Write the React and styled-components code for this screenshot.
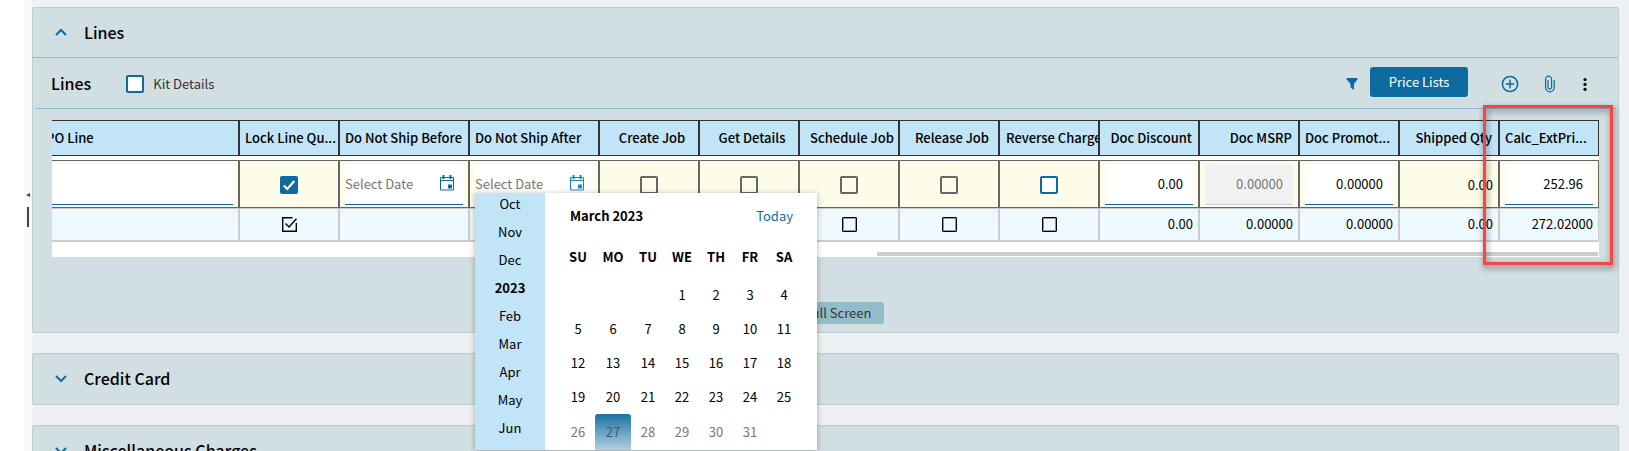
import React from "react";
import styled, { createGlobalStyle, css } from "styled-components";

const GlobalStyle = createGlobalStyle`
  * {
    box-sizing: border-box;
  }

  body {
    margin: 0;
    background: #edf1f4;
    overflow: hidden;
  }

  body, button, input {
    font-family: "Noto Sans CJK SC", "Open Sans", sans-serif;
    font-size: 13px;
    line-height: 18px;
    color: #000;
  }
`;

const Page = styled.div`
  display: flex;
  height: 100vh;
  overflow: hidden;
`;

const Gutter = styled.div`
  flex: 0 0 24px;
  background: #fff;
`;

const Splitter = styled.div`
  display: flex;
  flex: 0 0 8px;
  flex-direction: column;
  align-items: center;
  gap: 10px;
  padding-top: 193px;
  background: #fafafa;
`;

const SplitArrow = styled.span`
  border: 2px solid transparent;
  border-right: 4px solid #444;
  border-left: 0;
`;

const SplitHandle = styled.span`
  width: 2px;
  height: 20px;
  background: #444;
`;

const Main = styled.main`
  display: flex;
  flex: 1;
  flex-direction: column;
  gap: 20px;
  min-width: 0;
  padding: 7px 10px 0 0;
`;

const Panel = styled.section`
  flex: none;
  border: 1px solid #bccdd0;
  border-radius: 2px;
  background: #d1dee2;
`;

const PanelHeader = styled.button`
  display: flex;
  align-items: center;
  gap: 14px;
  width: 100%;
  height: 50px;
  padding: 0 0 2px 19px;
  border: 0;
  border-bottom: 1px solid ${props => (props.$open ? "#92bcc8" : "transparent")};
  background: none;
  font-size: 16px;
  font-weight: 500;
  line-height: 24px;
  text-align: left;
  cursor: pointer;
`;

const Toolbar = styled.div`
  display: flex;
  align-items: center;
  height: 51px;
  margin: 0 2px;
  padding: 2px 17px 0 16px;
  border-bottom: 1px solid #92bcc8;
`;

const ToolbarTitle = styled.h2`
  margin: 0 35px 2px 0;
  font-size: 16px;
  font-weight: 500;
  line-height: 24px;
`;

const CheckLabel = styled.label`
  display: flex;
  align-items: center;
  gap: 9px;
  color: #333;
`;

const Actions = styled.div`
  display: flex;
  align-items: center;
  margin-left: auto;
`;

const IconButton = styled.button`
  display: flex;
  justify-content: center;
  width: ${props => props.$width}px;
  padding: 0;
  border: 0;
  background: none;
  cursor: pointer;
`;

const PrimaryButton = styled.button`
  height: 30px;
  width: 98px;
  margin: 0 24px 4px 4px;
  padding: 0;
  border: 0;
  border-radius: 3px;
  background: #0e6b9f;
  color: #fff;
  cursor: pointer;
`;

const GridArea = styled.div`
  position: relative;
  margin: 11px 19px 0;
`;

const Viewport = styled.div`
  overflow: hidden;
  background: #fff;
`;

const ScrollTrack = styled.div`
  display: flex;
  justify-content: flex-end;
  height: 15px;
  padding: 10px 1px 1px 0;
`;

const ScrollThumb = styled.div`
  width: 721px;
  background: #ccc;
`;

/* scrolled to the right end, so the first column starts outside the viewport */
const Table = styled.table`
  width: calc(100% + 12px);
  margin-left: -12px;
  border-spacing: 0;
  table-layout: fixed;
`;

const Col = styled.col`
  width: ${props => props.$width}px;
`;

const headAlign = {
  left: css`
    padding: 0 0 0 5px;
    text-align: left;
  `,
  center: css`
    padding: 0 0 0 6px;
    text-align: center;
  `,
  right: css`
    padding: 0 6px 0 0;
    text-align: right;
  `
};

const HeadCell = styled.th`
  height: 36px;
  border: 1px solid #333;
  background: #c1e4f6;
  font-weight: 500;
  white-space: nowrap;
  overflow: hidden;
  ${props => headAlign[props.$align]}
`;

const Spacer = styled.td`
  height: 4px;
  padding: 0;
`;

const Cell = styled.td`
  text-align: ${props => props.$align};
`;

const EditCell = styled(Cell)`
  height: 48px;
  padding: 3px 5px 2px;
  border: 1px solid #666;
  background: #fdfce8;
`;

const DataCell = styled(Cell)`
  height: 34px;
  padding: 0 5px 2px;
  border: 1px solid #ccc;
  border-bottom-width: 2px;
  background: #edf8ff;
`;

const Field = styled.div`
  display: flex;
  align-items: center;
  height: 41px;
  padding-right: ${props => (props.$date ? 8 : 0)}px;
  border-bottom: 1px solid ${props => (props.$disabled ? "#ccc" : "#0e6b9f")};
  background: ${props => (props.$disabled ? "#f1f1f1" : "#fff")};

  svg {
    margin-bottom: 3px;
  }
`;

const TextInput = styled.input`
  flex: 1;
  width: 100%;
  min-width: 0;
  padding: 0 ${props => (props.$numeric ? 10 : 0)}px 0 0;
  border: 0;
  outline: none;
  background: none;
  text-align: ${props => (props.$numeric ? "right" : "left")};

  &::placeholder {
    color: #757575;
    opacity: 1;
  }

  &:disabled {
    color: #757575;
  }
`;

const CheckWrap = styled.span`
  display: inline-grid;
  vertical-align: middle;

  & > * {
    grid-area: 1 / 1;
  }

  svg {
    z-index: 1;
    pointer-events: none;
  }
`;

const checkKinds = {
  active: css`
    width: 18px;
    height: 18px;
    border: 2px solid #0e6b9f;
    border-radius: 2px;
    background: #fff;

    &:checked {
      background: #0e6b9f;
    }
  `,
  muted: css`
    width: 18px;
    height: 18px;
    border: 2px solid #666;
    border-radius: 2px;
  `,
  plain: css`
    width: 15px;
    height: 15px;
    border: 1px solid #000;
    border-radius: 1px;
    box-shadow: inset 0 0 0 1px rgba(0, 0, 0, 0.4);

    &:checked {
      border-color: transparent;
      box-shadow: none;
    }
  `
};

const CheckInput = styled.input`
  margin: 0;
  appearance: none;
  ${props => checkKinds[props.$kind]}
`;

const Highlight = styled.div`
  position: absolute;
  top: -15px;
  right: -14px;
  width: 130px;
  height: 160px;
  border: 3px solid #fb4343;
  filter: drop-shadow(1px 3px 3px rgba(0, 0, 0, 0.5));
  pointer-events: none;
`;

const PanelFooter = styled.div`
  display: flex;
  justify-content: center;
  padding: 45px 0 8px;
`;

const FooterButton = styled.button`
  height: 22px;
  padding: 0 13px;
  border: 0;
  border-radius: 3px;
  background: #92bcc9;
  color: #333;
`;

const Popup = styled.div`
  position: absolute;
  top: 73px;
  right: 782px;
  z-index: 2;
  display: flex;
  width: 342px;
  height: 257px;
  background: #fff;
  box-shadow: 0 1px 6px rgba(0, 0, 0, 0.3);
`;

const MonthList = styled.ul`
  display: flex;
  flex: 0 0 70px;
  flex-direction: column;
  justify-content: flex-end;
  margin: 0;
  padding: 0 0 8px;
  overflow: hidden;
  background: #c1e4f6;
  list-style: none;
  text-align: center;
`;

const Month = styled.li`
  flex: none;
  font-weight: ${props => (props.$year ? 700 : 400)};
  line-height: 28px;
`;

const Calendar = styled.div`
  flex: 1;
  padding-left: 16px;
`;

const CalendarHeader = styled.div`
  display: flex;
  justify-content: space-between;
  align-items: center;
  height: 43px;
  padding: 2px 24px 0 9px;
`;

const MonthTitle = styled.strong`
  font-weight: 700;
`;

const TodayButton = styled.button`
  padding: 0;
  border: 0;
  background: none;
  color: #0e6b9f;
`;

const Days = styled.table`
  width: 240px;
  border-spacing: 0;
  table-layout: fixed;
`;

const WeekDay = styled.th`
  height: 42px;
  padding: 0;
  font-weight: 700;
`;

const Day = styled.td`
  height: ${props => (props.$faded ? 36 : 34)}px;
  padding: 0;
  border-radius: 3px 3px 0 0;
  color: ${props => (props.$selected ? "#4a5860" : props.$faded ? "#777" : "#000")};
  background: ${props => (props.$selected ? "linear-gradient(#1b72a3, #b3cfe0)" : "none")};
  text-align: center;
`;

const columns = [
  { title: "PO Line", align: "left", edit: "text", value: "" },
  { title: "Lock Line Qu...", width: 100, align: "left", edit: "check", kind: "active", checked: true },
  { title: "Do Not Ship Before", width: 130, align: "left", edit: "date", value: "" },
  { title: "Do Not Ship After", width: 130, align: "left", edit: "date", value: "", active: true },
  { title: "Create Job", width: 100, align: "center", edit: "check", kind: "muted" },
  { title: "Get Details", width: 100, align: "center", edit: "check", kind: "muted" },
  { title: "Schedule Job", width: 100, align: "center", edit: "check", kind: "muted" },
  { title: "Release Job", width: 100, align: "center", edit: "check", kind: "muted" },
  { title: "Reverse Charge", width: 100, align: "center", edit: "check", kind: "active" },
  { title: "Doc Discount", width: 100, align: "right", edit: "number", value: "0.00", saved: "0.00" },
  { title: "Doc MSRP", width: 100, align: "right", edit: "number", value: "0.00000", saved: "0.00000", disabled: true },
  { title: "Doc Promot...", width: 100, align: "left", edit: "number", value: "0.00000", saved: "0.00000" },
  { title: "Shipped Qty", width: 100, align: "right", edit: "none", value: "0.00", saved: "0.00" },
  { title: "Calc_ExtPri...", width: 100, align: "left", edit: "number", value: "252.96", saved: "272.02000" }
];

const months = ["Oct", "Nov", "Dec", "2023", "Feb", "Mar", "Apr", "May", "Jun"];
const weekDays = ["SU", "MO", "TU", "WE", "TH", "FR", "SA"];
const weeks = [
  ["", "", "", 1, 2, 3, 4],
  [5, 6, 7, 8, 9, 10, 11],
  [12, 13, 14, 15, 16, 17, 18],
  [19, 20, 21, 22, 23, 24, 25],
  [26, 27, 28, 29, 30, 31, ""]
];

const Chevron = ({ up }) => (
  <svg width="18" height="14" viewBox="0 0 18 14" fill="none" stroke="#0e6b9f" strokeWidth="2">
    <path d={up ? "M4 10 9 5 14 10" : "M4 5 9 10 14 5"} />
  </svg>
);

const FilterIcon = () => (
  <svg width="12" height="14" viewBox="0 0 12 14" fill="#0e6b9f">
    <path d="M.5 1h11v1.200L8 7v6L4.500 10.500V7L.5 2.200z" />
  </svg>
);

const AddIcon = () => (
  <svg width="18" height="18" viewBox="0 0 18 18" fill="none" stroke="#0e6b9f" strokeWidth="1.500">
    <circle cx="9" cy="9" r="7.600" />
    <path d="M9 4.800v8.400M4.800 9h8.400" />
  </svg>
);

const ClipIcon = () => (
  <svg width="12" height="18" viewBox="0 0 12 18" fill="none" stroke="#0e6b9f" strokeWidth="1.200">
    <path d="M4 5v7.300a1.800 1.800 0 0 0 3.600 0V4.200a3 3 0 0 0-6 0v8.300a4.300 4.300 0 0 0 8.600 0V5" />
  </svg>
);

const MoreIcon = () => (
  <svg width="6" height="14" viewBox="0 0 6 14">
    <circle cx="3" cy="2.500" r="1.600" />
    <circle cx="3" cy="7.400" r="1.600" />
    <circle cx="3" cy="12.300" r="1.600" />
  </svg>
);

const CalendarIcon = ({ active }) => (
  <svg width="16" height="16" viewBox="0 0 16 16" fill="none" stroke={active ? "#1488d4" : "#0e6b9f"}>
    <path d="M1.500 2.500h13v12.500h-13z" />
    <path d="M1 5.500h14" />
    <path d="M4.500 0v4M11.500 0v4" strokeWidth="2" />
    <path d="M9 9.500h4v4h-4z" fill={active ? "#1488d4" : "#0e6b9f"} stroke="none" />
  </svg>
);

const Check = ({ kind, checked, ...rest }) => (
  <CheckWrap>
    <CheckInput type="checkbox" $kind={kind} defaultChecked={checked} {...rest} />
    {checked && kind === "active" && (
      <svg width="18" height="18" viewBox="0 0 18 18" fill="none" stroke="#fff" strokeWidth="2.200">
        <path d="M3.800 9.500 7.300 13 14.300 5" />
      </svg>
    )}
    {checked && kind === "plain" && (
      <svg width="15" height="15" viewBox="0 0 15 15" fill="none" stroke="#000" strokeWidth="1.400">
        <path d="M10.500 .7H.7v13.600h13.600V6" />
        <path d="M3.500 6.500 7 10 14.500 1.800" />
      </svg>
    )}
  </CheckWrap>
);

const EditControl = ({ column }) => {
  const { edit, title, value, disabled, active, kind, checked } = column;

  if (edit === "check") {
    return <Check kind={kind} checked={checked} aria-label={title} />;
  }
  if (edit === "none") {
    return value;
  }
  return (
    <Field $disabled={disabled} $date={edit === "date"}>
      <TextInput
        type="text"
        aria-label={title}
        defaultValue={value}
        disabled={disabled}
        $numeric={edit === "number"}
        placeholder={edit === "date" ? "Select Date" : undefined}
      />
      {edit === "date" && <CalendarIcon active={active} />}
    </Field>
  );
};

const LinesTable = () => (
  <Table>
    <colgroup>
      {columns.map(c => (c.width ? <Col key={c.title} $width={c.width} /> : <col key={c.title} />))}
    </colgroup>
    <thead>
      <tr>
        {columns.map(c => (
          <HeadCell key={c.title} $align={c.align}>{c.title}</HeadCell>
        ))}
      </tr>
    </thead>
    <tbody>
      <tr>
        <Spacer colSpan={columns.length} />
      </tr>
      <tr>
        {columns.map(c => (
          <EditCell key={c.title} $align={c.edit === "check" ? "center" : "right"}>
            <EditControl column={c} />
          </EditCell>
        ))}
      </tr>
      <tr>
        {columns.map(c => (
          <DataCell key={c.title} $align={c.edit === "check" ? "center" : "right"}>
            {c.edit === "check" ? (
              <Check kind="plain" checked={c.checked} disabled aria-label={c.title} />
            ) : (
              c.saved
            )}
          </DataCell>
        ))}
      </tr>
    </tbody>
  </Table>
);

const DatePopup = () => (
  <Popup>
    <MonthList>
      {months.map(m => (
        <Month key={m} $year={m === "2023"}>{m}</Month>
      ))}
    </MonthList>
    <Calendar>
      <CalendarHeader>
        <MonthTitle>March 2023</MonthTitle>
        <TodayButton type="button">Today</TodayButton>
      </CalendarHeader>
      <Days>
        <colgroup>
          {weekDays.map(d => (
            <Col key={d} $width={d === "MO" ? 36 : 34} />
          ))}
        </colgroup>
        <thead>
          <tr>
            {weekDays.map(d => (
              <WeekDay key={d}>{d}</WeekDay>
            ))}
          </tr>
        </thead>
        <tbody>
          {weeks.map((week, w) => (
            <tr key={w}>
              {week.map((day, i) => (
                <Day key={i} $faded={w === 4} $selected={day === 27}>{day}</Day>
              ))}
            </tr>
          ))}
        </tbody>
      </Days>
    </Calendar>
  </Popup>
);

const ClosedPanel = ({ title }) => (
  <Panel>
    <PanelHeader type="button" aria-expanded="false">
      <Chevron />
      {title}
    </PanelHeader>
  </Panel>
);

export default function App() {
  return (
    <Page>
      <GlobalStyle />
      <Gutter />
      <Splitter>
        <SplitArrow />
        <SplitHandle />
      </Splitter>
      <Main>
        <Panel>
          <PanelHeader type="button" $open aria-expanded="true">
            <Chevron up />
            Lines
          </PanelHeader>
          <Toolbar>
            <ToolbarTitle>Lines</ToolbarTitle>
            <CheckLabel>
              <Check kind="active" />
              Kit Details
            </CheckLabel>
            <Actions>
              <IconButton type="button" $width={28} aria-label="Filter"><FilterIcon /></IconButton>
              <PrimaryButton type="button">Price Lists</PrimaryButton>
              <IconButton type="button" $width={36} aria-label="Add"><AddIcon /></IconButton>
              <IconButton type="button" $width={43} aria-label="Attachments"><ClipIcon /></IconButton>
              <IconButton type="button" $width={28} aria-label="More"><MoreIcon /></IconButton>
            </Actions>
          </Toolbar>
          <GridArea>
            <Viewport>
              <LinesTable />
              <ScrollTrack>
                <ScrollThumb />
              </ScrollTrack>
            </Viewport>
            <DatePopup />
            <Highlight />
          </GridArea>
          <PanelFooter>
            <FooterButton type="button">Exit Full Screen</FooterButton>
          </PanelFooter>
        </Panel>
        <ClosedPanel title="Credit Card" />
        <ClosedPanel title="Miscellaneous Charges" />
      </Main>
    </Page>
  );
}
